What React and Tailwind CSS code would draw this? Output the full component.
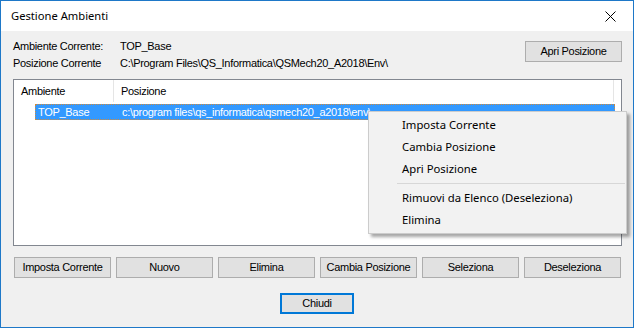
import React from "react";

const btn =
  "h-[21px] w-[97px] border border-[#adadad] bg-[#e1e1e1] text-[11px] tracking-[-0.3px] text-black flex items-center justify-center font-['Liberation_Sans',Arial,sans-serif]";

function MenuItem({ children }) {
  return (
    <div className="h-[22px] pl-[33px] flex items-center text-[11.3px] text-black">
      {children}
    </div>
  );
}

export default function App() {
  const buttons = [
    "Imposta Corrente",
    "Nuovo",
    "Elimina",
    "Cambia Posizione",
    "Seleziona",
    "Deseleziona",
  ];

  return (
    <div className="relative w-[634px] h-[328px] border border-[#1e78c8] bg-[#f0f0f0] flex flex-col overflow-hidden font-['Liberation_Sans',Arial,sans-serif] tracking-[-0.3px]">
      {/* title bar */}
      <div className="h-[30px] bg-white flex items-center justify-between pl-[10px] shrink-0">
        <span className="text-[11.2px] tracking-normal text-black font-['Noto_Sans','Open_Sans',sans-serif]">
          Gestione Ambienti
        </span>
        <div className="w-[46px] h-full flex items-center justify-center">
          <svg width="11" height="11" viewBox="0 0 11 11">
            <path d="M0.5 0.5 L10.5 10.5 M10.5 0.5 L0.5 10.5" stroke="#000" strokeWidth="1" />
          </svg>
        </div>
      </div>

      <div className="flex-1 flex flex-col pl-[12px] pr-[11px]">
        {/* current info */}
        <div className="flex justify-between pt-[7px]">
          <div className="flex flex-col text-[11px] text-black">
            <div className="flex h-[17px] items-center">
              <span className="w-[107px]">Ambiente Corrente:</span>
              <span>TOP_Base</span>
            </div>
            <div className="flex h-[17px] items-center">
              <span className="w-[107px]">Posizione Corrente</span>
              <span>C:\Program Files\QS_Informatica\QSMech20_A2018\Env\</span>
            </div>
          </div>
          <div className={btn + " mt-[3px]"}>Apri Posizione</div>
        </div>

        {/* list view */}
        <div className="mt-[7px] h-[167px] border border-[#828790] bg-white flex flex-col text-[11px] text-black">
          <div className="h-[22px] flex items-center">
            <div className="w-[100px] h-full flex items-center pl-[7px] border-r border-[#e5e5e5]">
              Ambiente
            </div>
            <div className="w-[500px] h-full flex items-center pl-[7px] border-r border-[#e5e5e5]">
              Posizione
            </div>
          </div>
          <div className="mt-[2px] ml-[21px] w-[580px] h-[16px] bg-[#3399ff] text-white flex items-center outline-1 outline-dotted outline-[#d08a3c] -outline-offset-1">
            <span className="w-[87px] pl-[3px]">TOP_Base</span>
            <span>c:\program files\qs_informatica\qsmech20_a2018\env\</span>
          </div>
        </div>

        {/* buttons */}
        <div className="mt-[11px] pl-[1px] flex gap-[5px]">
          {buttons.map((b) => (
            <div key={b} className={btn}>
              {b}
            </div>
          ))}
        </div>

        <div className="mt-[15px] self-center ml-[-1px] h-[21px] w-[74px] border-2 border-[#0078d7] bg-[#e1e1e1] text-[11px] text-black flex items-center justify-center">
          Chiudi
        </div>
      </div>

      {/* context menu */}
      <div className="absolute left-[367px] top-[110px] w-[259px] border border-[#cccccc] bg-[#f2f2f2] pt-[2px] pb-[2px] shadow-[3px_3px_3px_rgba(0,0,0,0.35)] tracking-normal font-['Noto_Sans','Open_Sans',sans-serif]">
        <MenuItem>Imposta Corrente</MenuItem>
        <MenuItem>Cambia Posizione</MenuItem>
        <MenuItem>Apri Posizione</MenuItem>
        <div className="my-[3px] ml-[28px] mr-[1px] h-px bg-[#d7d7d7]" />
        <MenuItem>Rimuovi da Elenco (Deseleziona)</MenuItem>
        <MenuItem>Elimina</MenuItem>
      </div>
    </div>
  );
}
